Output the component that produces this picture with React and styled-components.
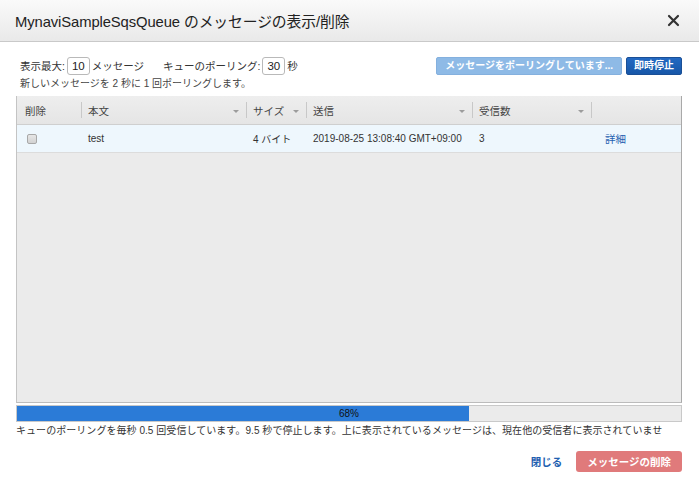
import React from "react";
import styled, { createGlobalStyle } from "styled-components";

const GlobalStyle = createGlobalStyle`
  html, body {
    margin: 0;
    padding: 0;
    background: #ffffff;
  }
  body {
    font-family: "Liberation Sans", "Noto Sans CJK JP", sans-serif;
    color: #333;
  }
`;

const Modal = styled.div`
  width: 699px;
  height: 492px;
  display: flex;
  flex-direction: column;
  background: #fff;
  overflow: hidden;
`;

const Header = styled.div`
  height: 41px;
  flex: none;
  display: flex;
  align-items: center;
  justify-content: space-between;
  padding: 0 18px 0 15px;
  background: linear-gradient(#fafafa, #e9e9e9);
  border-bottom: 1px solid #c9c9c9;
`;

const Title = styled.h1`
  margin: 0;
  font-size: 14.8px;
  font-weight: normal;
  color: #222;
  letter-spacing: -0.1px;
`;

const CloseButton = styled.button`
  border: 0;
  background: none;
  padding: 0;
  width: 14px;
  height: 14px;
  display: flex;
  cursor: pointer;
`;

const Body = styled.div`
  padding: 14px 17px 0 16px;
  display: flex;
  flex-direction: column;
`;

const Toolbar = styled.div`
  display: flex;
  justify-content: space-between;
  align-items: center;
  height: 19px;
`;

const Settings = styled.div`
  display: flex;
  align-items: center;
  padding-left: 4px;
  font-size: 10.5px;
  color: #333;
`;

const Group = styled.span`
  display: flex;
  align-items: center;
  gap: 2px;
  margin-right: ${(p) => p.$gap || 0}px;
`;

const NumBox = styled.span`
  display: inline-flex;
  align-items: center;
  justify-content: center;
  height: 16px;
  padding: 0 4px;
  border: 1px solid #b9b9b9;
  border-radius: 3px;
  font-size: 11.5px;
  color: #222;
  background: #fff;
`;

const Actions = styled.div`
  display: flex;
  gap: 4px;
`;

const Button = styled.button`
  height: 18px;
  padding: 0 ${(p) => p.$pad || 8}px;
  border-radius: 2px;
  border: 1px solid ${(p) => (p.$variant === "primary" ? "#1a4f96" : "#84b0de")};
  background: ${(p) =>
    p.$variant === "primary"
      ? "linear-gradient(#2369c2, #1757a8)"
      : "#8ebae6"};
  color: #fff;
  font-family: inherit;
  font-size: 10px;
  font-weight: bold;
  line-height: 16px;
  cursor: pointer;
`;

const Hint = styled.div`
  margin-top: 2px;
  padding-left: 4px;
  font-size: 10px;
  color: #444;
  height: 14px;
  line-height: 14px;
`;

const Table = styled.div`
  margin-top: 5px;
  height: 306px;
  display: flex;
  flex-direction: column;
  border-left: 1px solid #c4c4c4;
  border-right: 1px solid #a9a9a9;
  border-bottom: 1px solid #bcbcbc;
  background: #ebebeb;
`;

const Row = styled.div`
  display: grid;
  grid-template-columns: 64px 165px 60px 166px 119px 1fr;
  height: ${(p) => (p.$head ? 28 : 27)}px;
  align-items: center;
  background: ${(p) => (p.$head ? "linear-gradient(#eeeeee, #e5e5e5)" : "#eef7fd")};
  border-bottom: 1px solid ${(p) => (p.$head ? "#cfcfcf" : "#dcdcdc")};
`;

const HeadCell = styled.div`
  position: relative;
  height: 100%;
  display: flex;
  align-items: center;
  justify-content: space-between;
  padding: 0 7px 0 ${(p) => (p.$first ? 8 : 7)}px;
  font-size: 10.5px;
  color: #444;
  &::before {
    content: "";
    display: ${(p) => (p.$first ? "none" : "block")};
    position: absolute;
    left: 0;
    top: 6px;
    bottom: 6px;
    width: 1px;
    background: #c8c8c8;
  }
`;

const SortArrow = styled.span`
  width: 0;
  height: 0;
  border-left: 3px solid transparent;
  border-right: 3px solid transparent;
  border-top: 3px solid #9c9c9c;
  margin-top: 2px;
`;

const Cell = styled.div`
  padding-left: ${(p) => p.$pad || 7}px;
  font-size: 10px;
  color: #333;
  white-space: nowrap;
`;

const Check = styled.span`
  display: block;
  width: 8px;
  height: 8px;
  border: 1px solid #a8a8a8;
  border-radius: 2px;
  background: linear-gradient(#e6e6e6, #d2d2d2);
`;

const DetailLink = styled.a`
  color: #1f5fb0;
  font-size: 10.5px;
  text-decoration: none;
  padding-left: 14px;
  cursor: pointer;
`;

const Progress = styled.div`
  position: relative;
  margin-top: 2px;
  height: 15px;
  border: 1px solid #c9c9c9;
  background: #ebebeb;
`;

const ProgressFill = styled.div`
  height: 100%;
  background: #2b7bd7;
`;

const ProgressLabel = styled.span`
  position: absolute;
  inset: 0;
  display: flex;
  align-items: center;
  justify-content: center;
  font-size: 10px;
  color: #111;
`;

const Status = styled.div`
  margin-top: 0;
  font-size: 10px;
  color: #333;
  white-space: nowrap;
  overflow: hidden;
  letter-spacing: 0.05px;
`;

const Footer = styled.div`
  margin-top: 14px;
  padding-right: 17px;
  display: flex;
  justify-content: flex-end;
  align-items: center;
  gap: 14px;
`;

const TextLink = styled.a`
  color: #1f5fb0;
  font-size: 10.5px;
  font-weight: bold;
  text-decoration: none;
  cursor: pointer;
`;

const DangerButton = styled.button`
  height: 21px;
  padding: 0 11px;
  border: 0;
  border-radius: 3px;
  background: #e07a7b;
  color: #fff;
  font-family: inherit;
  font-size: 10.5px;
  font-weight: bold;
  cursor: pointer;
`;

const columns = [
  { label: "削除", sort: false },
  { label: "本文", sort: true },
  { label: "サイズ", sort: true },
  { label: "送信", sort: true },
  { label: "受信数", sort: true },
  { label: "", sort: false },
];

const progress = 68;

export default function App() {
  return (
    <>
      <GlobalStyle />
      <Modal>
        <Header>
          <Title>MynaviSampleSqsQueue のメッセージの表示/削除</Title>
          <CloseButton aria-label="閉じる">
            <svg width="13" height="13" viewBox="0 0 13 13">
              <path d="M2 2 L11 11 M11 2 L2 11" stroke="#333" strokeWidth="2.2" strokeLinecap="round" />
            </svg>
          </CloseButton>
        </Header>
        <Body>
          <Toolbar>
            <Settings>
              <Group $gap={19}>
                表示最大:<NumBox>10</NumBox>メッセージ
              </Group>
              <Group>
                キューのポーリング:<NumBox>30</NumBox>秒
              </Group>
            </Settings>
            <Actions>
              <Button $pad={8}>メッセージをポーリングしています...</Button>
              <Button $variant="primary" $pad={7}>即時停止</Button>
            </Actions>
          </Toolbar>
          <Hint>新しいメッセージを 2 秒に 1 回ポーリングします。</Hint>
          <Table>
            <Row $head>
              {columns.map((c, i) => (
                <HeadCell key={i} $first={i === 0}>
                  <span>{c.label}</span>
                  {c.sort && <SortArrow />}
                </HeadCell>
              ))}
            </Row>
            <Row>
              <Cell $pad={10}>
                <Check />
              </Cell>
              <Cell>test</Cell>
              <Cell>4 バイト</Cell>
              <Cell>2019-08-25 13:08:40 GMT+09:00</Cell>
              <Cell>3</Cell>
              <DetailLink>詳細</DetailLink>
            </Row>
          </Table>
          <Progress>
            <ProgressFill style={{ width: `${progress}%` }} />
            <ProgressLabel>{progress}%</ProgressLabel>
          </Progress>
          <Status>
            キューのポーリングを毎秒 0.5 回受信しています。9.5 秒で停止します。上に表示されているメッセージは、現在他の受信者に表示されていませ
          </Status>
        </Body>
        <Footer>
          <TextLink>閉じる</TextLink>
          <DangerButton>メッセージの削除</DangerButton>
        </Footer>
      </Modal>
    </>
  );
}
